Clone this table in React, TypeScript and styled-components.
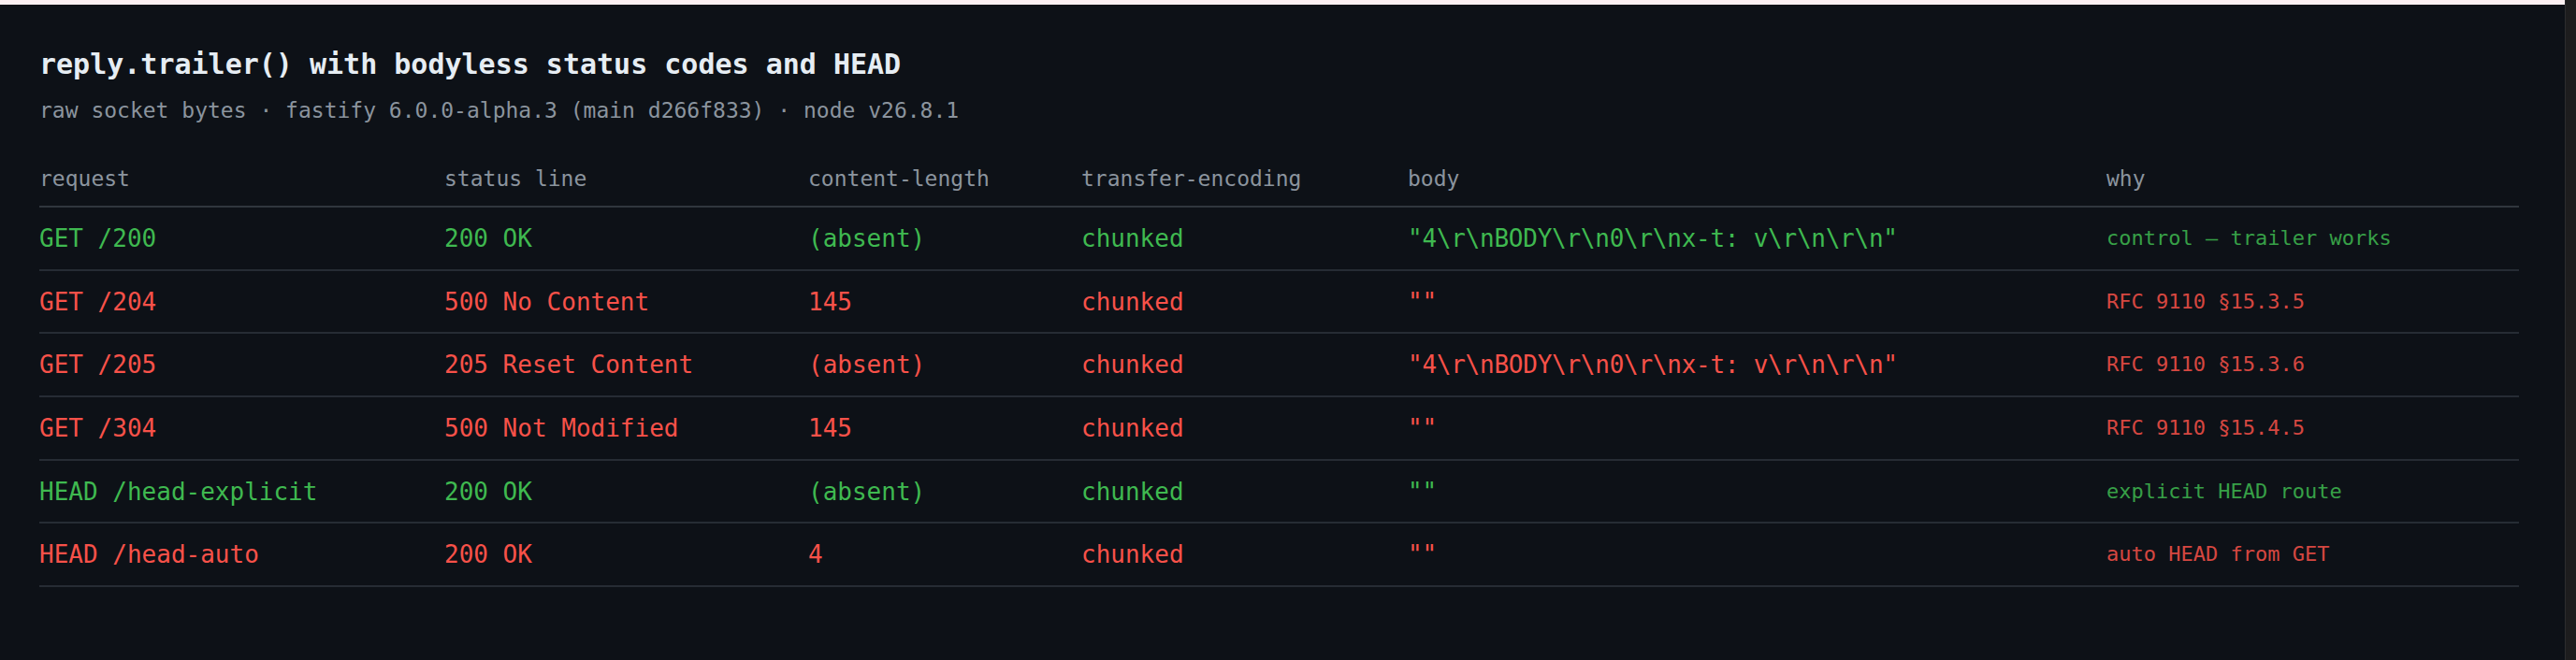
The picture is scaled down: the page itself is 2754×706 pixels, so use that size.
import * as React from "react";
import styled, { createGlobalStyle } from "styled-components";

const GlobalStyle = createGlobalStyle`
  html, body {
    margin: 0;
    padding: 0;
    background: #0d1117;
  }
  body {
    font-family: "DejaVu Sans Mono", "Liberation Mono", monospace;
  }
`;

const rows = [
  {
    ok: true,
    request: "GET /200",
    status: "200 OK",
    length: "(absent)",
    encoding: "chunked",
    body: '"4\\r\\nBODY\\r\\n0\\r\\nx-t: v\\r\\n\\r\\n"',
    why: "control — trailer works"
  },
  {
    ok: false,
    request: "GET /204",
    status: "500 No Content",
    length: "145",
    encoding: "chunked",
    body: '""',
    why: "RFC 9110 §15.3.5"
  },
  {
    ok: false,
    request: "GET /205",
    status: "205 Reset Content",
    length: "(absent)",
    encoding: "chunked",
    body: '"4\\r\\nBODY\\r\\n0\\r\\nx-t: v\\r\\n\\r\\n"',
    why: "RFC 9110 §15.3.6"
  },
  {
    ok: false,
    request: "GET /304",
    status: "500 Not Modified",
    length: "145",
    encoding: "chunked",
    body: '""',
    why: "RFC 9110 §15.4.5"
  },
  {
    ok: true,
    request: "HEAD /head-explicit",
    status: "200 OK",
    length: "(absent)",
    encoding: "chunked",
    body: '""',
    why: "explicit HEAD route"
  },
  {
    ok: false,
    request: "HEAD /head-auto",
    status: "200 OK",
    length: "4",
    encoding: "chunked",
    body: '""',
    why: "auto HEAD from GET"
  }
];

export default function App() {
  return (
    <Shell>
      <GlobalStyle />
      <Column>
        <TopStrip />
        <Main>
          <Title>reply.trailer() with bodyless status codes and HEAD</Title>
          <Subtitle>
            raw socket bytes · fastify 6.0.0-alpha.3 (main d266f833) · node v26.8.1
          </Subtitle>
          <Table>
            <HeaderRow>
              <HeaderCell>request</HeaderCell>
              <HeaderCell>status line</HeaderCell>
              <HeaderCell>content-length</HeaderCell>
              <HeaderCell>transfer-encoding</HeaderCell>
              <HeaderCell>body</HeaderCell>
              <HeaderCell>why</HeaderCell>
            </HeaderRow>
            {rows.map((row) => (
              <Row key={row.request} ok={row.ok}>
                <Cell>{row.request}</Cell>
                <Cell>{row.status}</Cell>
                <Cell>{row.length}</Cell>
                <Cell>{row.encoding}</Cell>
                <BodyCell>{row.body}</BodyCell>
                <WhyCell>{row.why}</WhyCell>
              </Row>
            ))}
          </Table>
        </Main>
      </Column>
      <Gutter />
    </Shell>
  );
}

const Shell = styled.div`
  display: flex;
  min-height: 100vh;
`;

const Column = styled.div`
  flex: 1;
  display: flex;
  flex-direction: column;
`;

const TopStrip = styled.div`
  height: 5px;
  background: #fcf0f2;
`;

const Main = styled.div`
  flex: 1;
  background: #0d1117;
  padding: 46px 0 0 42px;
`;

const Gutter = styled.div`
  width: 11px;
  background: #1d1d1e;
  border-left: 1px solid #2c2c2e;
`;

const Title = styled.h1`
  margin: 0;
  font-size: 30px;
  line-height: 36px;
  font-weight: 700;
  color: #e6edf3;
`;

const Subtitle = styled.div`
  margin-top: 17px;
  font-size: 23px;
  line-height: 28px;
  color: #8b949e;
`;

const Table = styled.div`
  margin-top: 45px;
  width: 2651px;
`;

const columns = "433px 389px 292px 349px 747px 441px";

const HeaderRow = styled.div`
  display: grid;
  grid-template-columns: ${columns};
  padding-bottom: 15px;
  border-bottom: 2px solid #30363d;
`;

const HeaderCell = styled.div`
  font-size: 23px;
  line-height: 28px;
  color: #8b949e;
  white-space: pre;
`;

const Row = styled.div<{ ok: boolean }>`
  display: grid;
  grid-template-columns: ${columns};
  align-items: center;
  box-sizing: border-box;
  height: 67.7px;
  border-bottom: 2px solid #262c34;
  color: ${(p) => (p.ok ? "#3fb950" : "#f85149")};
`;

const Cell = styled.div`
  font-size: 26px;
  line-height: 32px;
  white-space: pre;
`;

const BodyCell = styled(Cell)`
  letter-spacing: -0.25px;
`;

const WhyCell = styled(Cell)`
  font-size: 22px;
  opacity: 0.85;
`;
